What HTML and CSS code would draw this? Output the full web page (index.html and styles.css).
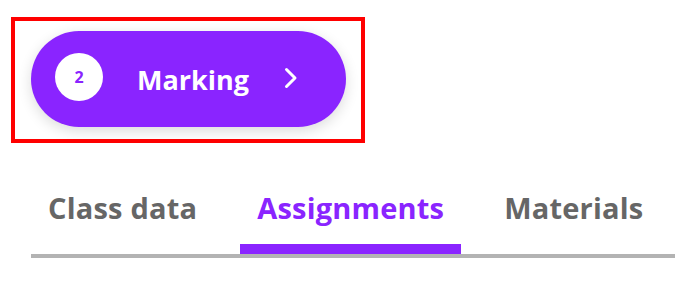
FILE: index.html
```html
<!DOCTYPE html>
<html>
<head>
<meta charset="utf-8">
<link rel="stylesheet" href="styles.css">
</head>
<body>
<div class="frame">
  <button class="pill">
    <span class="badge">2</span>
    <span class="label">Marking</span>
    <svg class="chev" width="14" height="22" viewBox="0 0 14 22"><polyline points="2.5,2.5 11,11 2.5,19.5" fill="none" stroke="#fff" stroke-width="3" stroke-linecap="round" stroke-linejoin="round"/></svg>
  </button>
</div>
<nav class="tabs">
  <span class="tab">Class data</span>
  <span class="tab active">Assignments</span>
  <span class="tab">Materials</span>
</nav>
</body>
</html>
```
FILE: styles.css
```css
body {
  margin: 0;
  font-family: "Open Sans", Lato, sans-serif;
  background: #fff;
}
.frame {
  width: max-content;
  margin: 17px 0 0 11px;
  border: 4px solid #ff0000;
  padding: 10px 15px 12px 16px;
}
.pill {
  display: flex;
  align-items: center;
  box-sizing: border-box;
  width: 315px;
  height: 96px;
  border: none;
  border-radius: 48px;
  background: #8a24ff;
  box-shadow: 0 4px 14px rgba(0, 0, 0, 0.14);
  padding: 0 0 0 24px;
  margin: 0;
  font-family: inherit;
}
.badge {
  display: flex;
  align-items: center;
  justify-content: center;
  width: 48px;
  height: 48px;
  border-radius: 50%;
  background: #fff;
  color: #8a24ff;
  font-size: 16px;
  font-weight: 700;
  margin-bottom: 4px;
}
.label {
  margin-left: 34px;
  color: #fff;
  font-size: 27px;
  font-weight: 700;
}
.chev {
  margin-left: 35px;
  margin-bottom: 2px;
}
.tabs {
  display: flex;
  gap: 26px;
  margin: 48px 0 0 31px;
  border-bottom: 4px solid #b3b3b3;
}
.tab {
  padding: 0 17px 18px;
  border-bottom: 10px solid transparent;
  font-size: 29px;
  font-weight: 700;
  line-height: 1.2;
  letter-spacing: 0.2px;
  color: #666;
  white-space: nowrap;
}
.tab.active {
  color: #8a24ff;
  border-bottom-color: #8a24ff;
}
```
